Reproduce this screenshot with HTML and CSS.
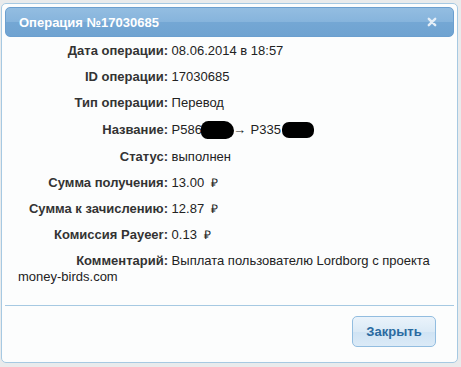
FILE: index.html
```html
<!DOCTYPE html>
<html lang="ru">
<head>
  <meta charset="UTF-8">
  <title>Операция №17030685</title>
  <link rel="stylesheet" href="styles.css">
</head>
<body>
  <div class="dialog">
    <div class="titlebar">
      <span class="title">Операция №17030685</span>
      <a href="#" class="close" title="Закрыть">
        <svg width="10" height="10" viewBox="0 0 10 10"><path d="M1.8 1.8 L8.2 8.2 M8.2 1.8 L1.8 8.2" stroke="#e4eef7" stroke-width="2.4" stroke-linecap="round"/></svg>
      </a>
    </div>

    <div class="content">
      <div class="row"><span class="label">Дата операции:</span> 08.06.2014 в 18:57</div>
      <div class="row"><span class="label">ID операции:</span> 17030685</div>
      <div class="row"><span class="label">Тип операции:</span> Перевод</div>
      <div class="row"><span class="label">Название:</span> P586<span class="blot"></span><span class="arrow">→</span> P335<span class="blot blot-2"></span></div>
      <div class="row"><span class="label">Статус:</span> выполнен</div>
      <div class="row"><span class="label">Сумма получения:</span> 13.00 <span class="rub">₽</span></div>
      <div class="row"><span class="label">Сумма к зачислению:</span> 12.87 <span class="rub">₽</span></div>
      <div class="row"><span class="label">Комиссия Payeer:</span> 0.13 <span class="rub">₽</span></div>
      <div class="row comment"><span class="label">Комментарий:</span> Выплата пользователю Lordborg с проекта money-birds.com</div>
    </div>

    <div class="buttonpane">
      <button class="btn">Закрыть</button>
    </div>
  </div>
</body>
</html>
```

FILE: styles.css
```css
body {
  margin: 0;
  background: #e9ebec;
  font-family: 'Liberation Sans', Arial, sans-serif;
  font-size: 13px;
}

.dialog {
  width: 449px;
  height: 352px;
  margin: 3px 0 0 1px;
  padding: 3px;
  border: 1px solid #a6c9e2;
  border-radius: 5px;
  background: #fcfdfd;
  display: flex;
  flex-direction: column;
}

.titlebar {
  height: 28px;
  padding: 0 13px;
  border: 1px solid #6b9fcf;
  border-radius: 5px;
  background: linear-gradient(to bottom, #93bde1 0%, #86b4dc 50%, #74a7d4 51%, #6fa3d1 100%);
  display: flex;
  align-items: center;
  justify-content: space-between;
}

.title {
  color: #fff;
  font-weight: bold;
  font-size: 13px;
}

.close {
  display: flex;
  margin-right: 3px;
}

.content {
  padding: 6px 0 0 13px;
  color: #222;
  flex: 1;
}

.row {
  line-height: 16px;
  margin-bottom: 10px;
}

.label {
  display: inline-block;
  width: 150px;
  text-align: right;
  font-weight: bold;
  color: #333;
}

.blot {
  display: inline-block;
  width: 33px;
  height: 18px;
  margin-left: -1px;
  background: #000;
  border-radius: 9px 12px 10px 8px;
  vertical-align: -5px;
}
.blot-2 {
  width: 32px;
  height: 16px;
  margin-left: 1px;
  border-radius: 7px;
  vertical-align: -4px;
}

.arrow {
  display: inline-block;
  width: 14px;
  margin-left: -1px;
}

.rub {
  font-size: 12px;
  margin-left: 3px;
}

.buttonpane {
  border-top: 1px solid #a6c9e2;
  height: 54px;
  padding: 10px 18px 0 0;
  display: flex;
  justify-content: flex-end;
  align-items: flex-start;
  box-sizing: border-box;
}

.btn {
  width: 84px;
  height: 31px;
  border: 1px solid #92bde0;
  border-radius: 5px;
  background: linear-gradient(to bottom, #eaf3fb 0%, #dbeaf6 50%, #cfe3f4 51%, #dbeaf7 100%);
  color: #2a6aa0;
  font-family: 'Liberation Sans', Arial, sans-serif;
  font-size: 13px;
  font-weight: bold;
  cursor: pointer;
}
```
